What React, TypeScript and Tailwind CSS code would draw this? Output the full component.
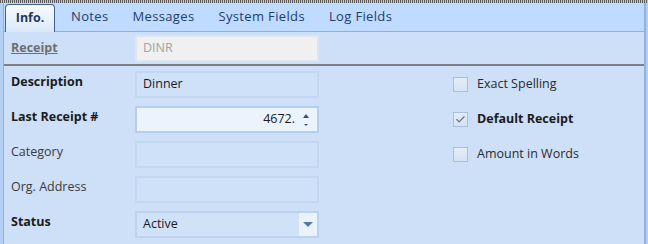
import { Check } from "lucide-react"

const tabs = ["Notes", "Messages", "System Fields", "Log Fields"]

type Row = { label: string; bold?: boolean; value?: string; kind?: "text" | "spin" | "select" }

const rows: Row[] = [
  { label: "Description", bold: true, value: "Dinner" },
  { label: "Last Receipt #", bold: true, value: "4672.", kind: "spin" },
  { label: "Category" },
  { label: "Org. Address" },
  { label: "Status", bold: true, value: "Active", kind: "select" },
]

const checks = [
  { label: "Exact Spelling", checked: false },
  { label: "Default Receipt", checked: true },
  { label: "Amount in Words", checked: false },
]

function Field({ row }: { row: Row }) {
  if (row.kind === "spin") {
    return (
      <div className="flex h-[27px] w-[184px] items-center border-2 border-[#b6cdeb] bg-[#ebf3fd] pl-2">
        <span className="flex-1 text-right text-[#1b1b1b]">{row.value}</span>
        <div className="flex w-[22px] flex-col items-center justify-center gap-[6px]">
          <span className="h-0 w-0 border-x-[3px] border-b-[4px] border-x-transparent border-b-[#34507a]" />
          <span className="h-0 w-0 border-x-[2px] border-t-[2px] border-x-transparent border-t-[#34507a]" />
        </div>
      </div>
    )
  }
  if (row.kind === "select") {
    return (
      <div className="flex h-[27px] w-[184px] items-center border-2 border-[#bcd2ee] bg-[#cfe2f8]">
        <span className="flex-1 pl-[6px] text-[#1b1b1b]">{row.value}</span>
        <div className="flex h-full w-[18px] items-center justify-center bg-[#e9f2fd]">
          <span className="h-0 w-0 border-x-[5px] border-t-[5px] border-x-transparent border-t-[#5577a8]" />
        </div>
      </div>
    )
  }
  return (
    <div className="flex h-[27px] w-[184px] items-center border-2 border-[#c2d7f1] bg-[#cee1f8] pl-[6px] text-[#1b1b1b]">
      {row.value}
    </div>
  )
}

export default function App() {
  return (
    <div
      className="flex h-[244px] w-[648px] flex-col overflow-hidden bg-[#cde0f8] text-[12.5px]"
      style={{ fontFamily: '"Open Sans", "Noto Sans", sans-serif' }}
    >
      {/* dotted top edge */}
      <div className="h-[3px] shrink-0 bg-[repeating-linear-gradient(90deg,#5a5a5a_0_1px,#c8c8c8_1px_2px)]" />

      <div className="flex flex-1">
        <div className="w-[3px] bg-[#b3cff3]" />
        <div className="w-[1px] bg-[#8fb3e0]" />

        <div className="flex flex-1 flex-col">
          {/* tab strip */}
          <div className="flex h-[29px] items-end border-b border-[#8db1df] bg-[#bfdbff] pl-[1px]">
            <div className="-mb-px flex h-[28px] w-[50px] items-center justify-center rounded-t-[4px] border border-b-0 border-[#40618f] bg-gradient-to-b from-[#f7fbff] to-[#dbe8f9] font-bold text-[#1e395b]">
              Info.
            </div>
            <div className="flex h-[28px] items-center gap-[24px] pl-[16px] text-[13px] tracking-[0.35px] text-[#1f3d6b]">
              {tabs.map((t) => (
                <span key={t}>{t}</span>
              ))}
            </div>
          </div>

          {/* receipt code */}
          <div className="flex h-[34px] items-center border-b-2 border-[#7c7f85] pl-[7px]">
            <span className="w-[124px] font-bold text-[#6e6e6e] underline">Receipt</span>
            <div className="flex h-[27px] w-[184px] items-center border-2 border-[#dde6f0] bg-[#f0f0f0] pl-[6px] text-[#a3a3a3]">
              DINR
            </div>
          </div>

          {/* fields */}
          <div className="flex pt-[5px]">
            <div className="flex flex-col gap-[8px] pl-[7px]">
              {rows.map((r) => (
                <div key={r.label} className="flex items-center">
                  <span
                    className={
                      r.bold
                        ? "w-[124px] -translate-y-[2px] font-bold text-[#1b1b1b]"
                        : "w-[124px] -translate-y-[2px] text-[#3a3a3a]"
                    }
                  >
                    {r.label}
                  </span>
                  <Field row={r} />
                </div>
              ))}
            </div>

            <div className="flex flex-col gap-[14px] pl-[134px] pt-[3px]">
              {checks.map((c) => (
                <div key={c.label} className="flex h-[21px] items-center">
                  <span className="flex h-[15px] w-[15px] items-center justify-center border border-[#a9bfdb] bg-gradient-to-b from-[#e4edf8] to-[#d6e3f3]">
                    {c.checked && <Check className="h-[11px] w-[11px] text-[#5a6f8c]" strokeWidth={2.5} />}
                  </span>
                  <span className={c.checked ? "pl-[9px] font-bold text-[#1b1b1b]" : "pl-[9px] text-[#2b2b2b]"}>
                    {c.label}
                  </span>
                </div>
              ))}
            </div>
          </div>
        </div>

        <div className="w-[2px] bg-[#8fb3e0]" />
        <div className="w-[2px] bg-[#b3cff3]" />
      </div>
    </div>
  )
}
